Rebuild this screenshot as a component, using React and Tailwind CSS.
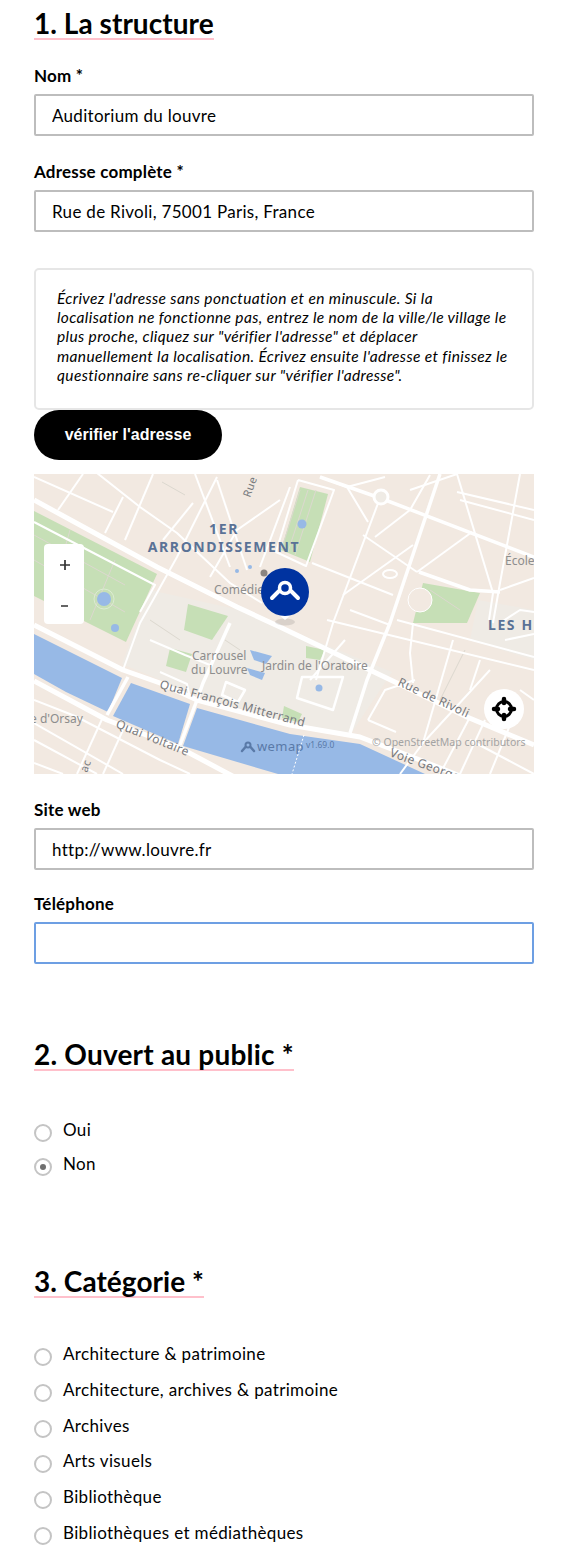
const font = { fontFamily: "Lato, 'Noto Sans', sans-serif" };

const thickRoads = [
  [[34, 500], [157, 567], [237, 607], [280, 627], [397, 683], [467, 717], [534, 745]],
  [[34, 625], [123, 670], [160, 683], [197, 700], [290, 725], [360, 737], [420, 760], [470, 780]],
  [[34, 681], [107, 720], [180, 748], [240, 780]],
];

const mediumRoads = [
  [[320, 477], [380, 498], [534, 557]],
  [[440, 474], [390, 623], [367, 680], [350, 733]],
  [[230, 623], [203, 683], [197, 700]],
  [[128, 677], [107, 715]],
  [[197, 700], [180, 745]],
  [[419, 572], [470, 590], [500, 592]],
];

const roads = [
  [[34, 477], [113, 512]],
  [[97, 473], [140, 507], [177, 533], [230, 583], [262, 603]],
  [[83, 474], [58, 510]],
  [[153, 474], [125, 540]],
  [[123, 497], [105, 533]],
  [[217, 477], [177, 557], [153, 600], [140, 623], [123, 670]],
  [[193, 503], [163, 540]],
  [[195, 474], [230, 567]],
  [[217, 480], [247, 570]],
  [[280, 500], [237, 530], [210, 577]],
  [[290, 487], [260, 567]],
  [[298, 480], [276, 552], [306, 566], [334, 490], [298, 480]],
  [[457, 474], [493, 593], [489, 620]],
  [[520, 474], [500, 583], [493, 623]],
  [[380, 498], [333, 623], [316, 680]],
  [[347, 487], [368, 522]],
  [[363, 535], [417, 572]],
  [[410, 510], [375, 537]],
  [[472, 532], [417, 572]],
  [[413, 545], [343, 595]],
  [[312, 563], [393, 595]],
  [[500, 590], [534, 578]],
  [[457, 492], [534, 510]],
  [[460, 500], [534, 520]],
  [[320, 477], [347, 487], [385, 477]],
  [[413, 623], [410, 653], [413, 683]],
  [[453, 640], [423, 743]],
  [[327, 620], [534, 670]],
  [[397, 620], [534, 657]],
  [[490, 670], [423, 743], [400, 774]],
  [[415, 680], [385, 690], [368, 720]],
  [[368, 720], [396, 732]],
  [[470, 717], [440, 774]],
  [[345, 640], [310, 680]],
  [[103, 717], [77, 774]],
  [[123, 730], [103, 774]],
  [[34, 740], [97, 774]],
  [[34, 723], [123, 774]],
  [[34, 763], [63, 774]],
  [[34, 700], [75, 716], [160, 760], [190, 774]],
  [[34, 522], [155, 585], [140, 612]],
  [[470, 740], [534, 774]],
  [[485, 720], [460, 774]],
  [[510, 725], [490, 774]],
  [[150, 640], [185, 655], [210, 665]],
  [[160, 672], [187, 684], [190, 698]],
  [[500, 623], [520, 610], [534, 612]],
  [[505, 640], [534, 634]],
  [[480, 660], [470, 690]],
  [[430, 475], [410, 510]],
  [[410, 490], [457, 474]],
  [[350, 610], [390, 625]],
  [[520, 690], [534, 700]],
];

const thinLines = [
  [[34, 535], [125, 585]],
  [[34, 560], [125, 612]],
  [[70, 530], [50, 600]],
  [[115, 560], [90, 620]],
  [[162, 482], [185, 495]],
  [[316, 490], [295, 555]],
  [[308, 490], [288, 552]],
  [[300, 490], [282, 548]],
  [[225, 640], [240, 650]],
  [[465, 650], [440, 700]],
  [[150, 620], [180, 640]],
  [[430, 590], [460, 610]],
];

function MapPreview() {
  const line = (pts) => pts.map((p) => p.join(",")).join(" ");

  return (
    <svg viewBox="34 474 500 300" className="block w-[500px] h-[300px]" fontFamily="'Noto Sans', 'Open Sans', sans-serif">
      <rect x="34" y="474" width="500" height="300" fill="#f2e9e1" />

      {/* louvre and les halles ground */}
      <polygon points="150,590 240,610 392,672 350,735 290,722 200,696 122,664" fill="#efebe5" />
      <polygon points="478,600 534,610 534,660 470,640" fill="#efebe5" />

      {/* seine */}
      <polygon points="34,634 122,678 108,712 66,692 34,674" fill="#97b9e6" />
      <polygon points="131,683 190,704 178,744 113,716" fill="#97b9e6" />
      <polygon points="197,708 290,734 360,744 425,774 278,774 183,746" fill="#97b9e6" />

      {/* parks */}
      <polygon points="34,511 157,574 126,642 34,596" fill="#c6dfb6" />
      <polygon points="300,487 328,494 310,562 281,550" fill="#c6dfb6" />
      <polygon points="423,583 480,593 467,623 413,623" fill="#c6dfb6" />
      <polygon points="188,604 228,616 212,640 184,630" fill="#c6dfb6" />
      <polygon points="170,648 192,654 186,672 166,666" fill="#c6dfb6" />
      <polygon points="306,646 325,650 320,660 306,658" fill="#c6dfb6" />
      <polygon points="284,706 302,714 298,722 282,718" fill="#c6dfb6" />

      <g fill="none" stroke="#dcd8cf" strokeWidth="1">
        {thinLines.map((pts, i) => (
          <polyline key={i} points={line(pts)} />
        ))}
      </g>

      <g fill="none" stroke="#fff" strokeLinejoin="round">
        {roads.map((pts, i) => (
          <polyline key={i} points={line(pts)} strokeWidth="2" />
        ))}
        {mediumRoads.map((pts, i) => (
          <polyline key={i} points={line(pts)} strokeWidth="3.5" />
        ))}
        {thickRoads.map((pts, i) => (
          <polyline key={i} points={line(pts)} strokeWidth="5" />
        ))}
        <circle cx="381" cy="497" r="7" strokeWidth="3" fill="#efebe5" />
        <polygon points="302,677 343,677 333,710 297,698" strokeWidth="2.5" />
        <polygon points="226,682 245,690 238,702 222,695" strokeWidth="2.5" />
        <ellipse cx="390" cy="574" rx="7" ry="4" strokeWidth="2" />
        <circle cx="420" cy="600" r="12" strokeWidth="1" fill="#f2e9e1" />
      </g>

      {/* ponds */}
      <circle cx="104" cy="599" r="7" fill="#97b9e6" />
      <circle cx="104" cy="599" r="10" fill="none" stroke="#dcecd2" />
      <circle cx="115" cy="628" r="4" fill="#97b9e6" />
      <circle cx="302" cy="524" r="4.5" fill="#97b9e6" />
      <circle cx="319" cy="688" r="3.5" fill="#97b9e6" />
      <circle cx="237" cy="571" r="2" fill="#97b9e6" />
      <circle cx="250" cy="567" r="2" fill="#97b9e6" />
      <polygon points="250,650 272,656 266,664 254,660" fill="#97b9e6" />
      <polygon points="247,668 265,673 262,680 250,675" fill="#97b9e6" />
      <circle cx="264" cy="573" r="3.5" fill="#8b8580" />

      {/* labels */}
      <g fill="#5a7296" fontWeight="700" fontSize="14" letterSpacing="1.6">
        <text x="224" y="534" textAnchor="middle">1ER</text>
        <text x="224" y="552" textAnchor="middle">ARRONDISSEMENT</text>
        <text x="488" y="630">LES H</text>
      </g>
      <g fill="#8d8d8d" fontSize="12">
        <text x="214" y="594">Comédie</text>
        <text x="505" y="565">École</text>
        <text x="192" y="660">Carrousel</text>
        <text x="191" y="674">du Louvre</text>
        <text x="262" y="670">Jardin de l'Oratoire</text>
        <text x="30" y="723">e d'Orsay</text>
      </g>
      <g fill="#77797d" fontSize="12" letterSpacing="0.4">
        <text transform="translate(159,688) rotate(15)">Quai François Mitterrand</text>
        <text transform="translate(115,727) rotate(22)">Quai Voltaire</text>
        <text transform="translate(397,685) rotate(25)">Rue de Rivoli</text>
        <text transform="translate(389,756) rotate(20)">Voie Georges</text>
        <text transform="translate(250,498) rotate(-70)" fontSize="11">Rue</text>
        <text transform="translate(87,773) rotate(-70)" fontSize="11">ac</text>
      </g>
      <text x="372" y="746" fill="#a3a3a3" fontSize="10.5">© OpenStreetMap contributors</text>
      <g fill="#5a7aa8">
        <circle cx="248" cy="745" r="2.5" fill="none" stroke="#5a7aa8" strokeWidth="2" />
        <path d="M245.5 747 L242 751 M250.5 747 L254 751" stroke="#5a7aa8" strokeWidth="2.5" strokeLinecap="round" />
        <text x="257" y="751" fontSize="13" letterSpacing="0.4">wemap</text>
        <text x="306" y="748" fontSize="8.5">v1.69.0</text>
      </g>
      <line x1="304" y1="735" x2="292" y2="774" stroke="#fff" strokeWidth="1" strokeDasharray="2 2" />

      {/* marker */}
      <ellipse cx="285" cy="622" rx="10" ry="3.5" fill="#000" opacity="0.1" />
      <path d="M278 614 L285 620 L292 614 Z" fill="#fff" />
      <circle cx="285" cy="592" r="24" fill="#0033a0" />
      <circle cx="285" cy="588" r="5.5" fill="none" stroke="#fff" strokeWidth="3.5" />
      <path d="M279 591 L272 598 M291 591 L298 598" stroke="#fff" strokeWidth="4" strokeLinecap="round" />

      {/* zoom control */}
      <rect x="44" y="544" width="40" height="80" rx="4" fill="#fff" />
      <path d="M60 565 H70 M65 560 V570 M61 606 H68" stroke="#333" strokeWidth="1.7" />

      {/* locate button */}
      <circle cx="504" cy="709" r="20" fill="#fff" />
      <circle cx="504" cy="709" r="7.5" fill="none" stroke="#000" strokeWidth="3" />
      <path d="M504 699 V703 M504 715 V719 M494 709 H498 M510 709 H514" stroke="#000" strokeWidth="4.5" strokeLinecap="round" />
    </svg>
  );
}

function Heading({ children, className }) {
  return (
    <h2 className={className}>
      <span className="inline-block text-[28px] leading-[29px] tracking-[0.05px] font-bold text-black border-b-2 border-[#ffc0cb]">
        {children}
      </span>
    </h2>
  );
}

function Field({ label, value, className, focused }) {
  return (
    <div className={className}>
      <label className="block text-[17px] leading-[20px] tracking-[0.2px] font-bold text-black mb-[8px]">{label}</label>
      <input
        defaultValue={value}
        className={
          focused
            ? "block w-full h-[42px] px-[16px] text-[17px] tracking-[0.3px] text-black bg-white rounded-[2px] border-2 border-[#6d9fe3] outline-none"
            : "block w-full h-[42px] px-[16px] text-[17px] tracking-[0.3px] text-black bg-white rounded-[2px] border-2 border-[#bdbdbd] outline-none"
        }
      />
    </div>
  );
}

function Radio({ label, checked, className }) {
  return (
    <div className={"flex items-start gap-[11px] " + (className || "")}>
      <span className="mt-[4px] w-[18px] h-[18px] rounded-full border-2 border-[#c4c4c4] bg-white flex items-center justify-center shrink-0">
        {checked && <span className="w-[6px] h-[6px] rounded-full bg-[#6f6f6f]" />}
      </span>
      <span className="text-[17px] leading-[20px] tracking-[0.35px] text-black">{label}</span>
    </div>
  );
}

const categories = [
  { label: "Architecture & patrimoine", gap: "" },
  { label: "Architecture, archives & patrimoine", gap: "mt-[14px]" },
  { label: "Archives", gap: "mt-[14px]" },
  { label: "Arts visuels", gap: "mt-[13px]" },
  { label: "Bibliothèque", gap: "mt-[14px]" },
  { label: "Bibliothèques et médiathèques", gap: "mt-[14px]" },
];

export default function App() {
  return (
    <div className="w-[574px] h-[1554px] overflow-hidden bg-white pl-[34px] pr-[40px] pt-[9px]" style={font}>
      <Heading>1. La structure</Heading>

      <Field className="mt-[26px]" label="Nom *" value="Auditorium du louvre" />
      <Field className="mt-[26px]" label="Adresse complète *" value="Rue de Rivoli, 75001 Paris, France" />

      <div className="mt-[36px] h-[142px] border-2 border-[#e6e6e6] rounded-[5px] pl-[21px] pt-[19px]">
        <p className="text-[15.5px] leading-[19.2px] tracking-[0.37px] italic text-black whitespace-nowrap">
          Écrivez l'adresse sans ponctuation et en minuscule. Si la
          <br />
          localisation ne fonctionne pas, entrez le nom de la ville/le village le
          <br />
          plus proche, cliquez sur "vérifier l'adresse" et déplacer
          <br />
          manuellement la localisation. Écrivez ensuite l'adresse et finissez le
          <br />
          questionnaire sans re-cliquer sur "vérifier l'adresse".
        </p>
      </div>

      <button className="block w-[188px] h-[50px] rounded-full bg-black text-white text-[16px] font-bold" style={{ fontFamily: "'Liberation Sans', sans-serif" }}>
        vérifier l'adresse
      </button>

      <div className="mt-[14px]">
        <MapPreview />
      </div>

      <Field className="mt-[26px]" label="Site web" value="http://www.louvre.fr" />
      <Field className="mt-[24px]" label="Téléphone" value="" focused />

      <Heading className="mt-[76px]">
        <span className="tracking-[0.2px]">2. Ouvert au public *</span>
      </Heading>

      <div className="mt-[49px]">
        <Radio label="Oui" />
        <Radio className="mt-[12px]" label="Non" checked />
      </div>

      <Heading className="mt-[91px]">3. Catégorie *</Heading>

      <div className="mt-[46px]">
        {categories.map((category) => (
          <Radio key={category.label} className={category.gap} label={category.label} />
        ))}
      </div>
    </div>
  );
}
